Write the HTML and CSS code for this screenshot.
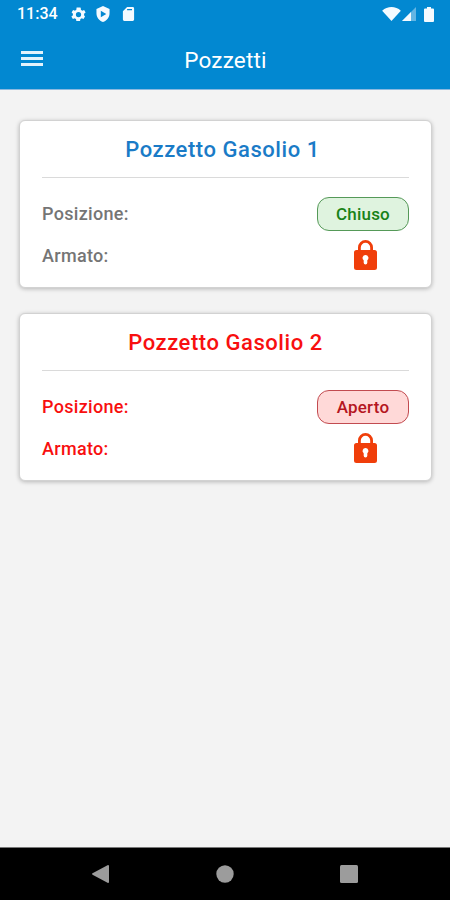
FILE: index.html
```html
<!DOCTYPE html>
<html lang="it">
<head>
<meta charset="utf-8">
<title>Pozzetti</title>
<link rel="stylesheet" href="styles.css">
</head>
<body>
<header class="top">
  <div class="status">
    <span class="clock">11:34</span>
    <svg class="gear" viewBox="2 2 20 20"><path fill-rule="evenodd" d="M19.4 13a7.500 7.500 0 0 0 0-2l2.100-1.600-2-3.500-2.500 1a7.600 7.600 0 0 0-1.700-1L15 3.200a.5.5 0 0 0-.5-.4h-5L9 5.900a7.600 7.600 0 0 0-1.700 1l-2.500-1-2 3.500L4.600 11a7.500 7.500 0 0 0 0 2l-2.100 1.600 2 3.500 2.500-1a7.600 7.600 0 0 0 1.700 1l.4 2.700h5l.4-2.700a7.600 7.600 0 0 0 1.700-1l2.500 1 2-3.500zM12 15.500a3.500 3.500 0 1 1 0-7 3.500 3.500 0 0 1 0 7z"/></svg>
    <svg class="shield" viewBox="3 1 18 22"><path fill-rule="evenodd" d="M12 1 3 5v6c0 5.500 3.800 10.700 9 12 5.200-1.300 9-6.500 9-12V5zM9 7.500l7.500 4.500L9 16.500z"/></svg>
    <svg class="sd" viewBox="4 2 16 20"><path fill-rule="evenodd" d="M18 2h-8L4 8v12a2 2 0 0 0 2 2h12a2 2 0 0 0 2-2V4a2 2 0 0 0-2-2zM10 5h7v1.500h-7z"/></svg>
    <span class="signals">
      <svg class="wifi" viewBox="0 0 20 15"><path d="M10 15 0 4C5.500-1.300 14.500-1.300 20 4z"/></svg>
      <svg class="cell" viewBox="0 0 14 14"><path opacity=".4" d="M14 0v14H0z"/><path d="M9 5v9H0z"/></svg>
      <svg class="battery" viewBox="0 0 10 15"><path d="M3 0h4v1.500h2a1 1 0 0 1 1 1V14a1 1 0 0 1-1 1H1a1 1 0 0 1-1-1V2.500a1 1 0 0 1 1-1h2z"/></svg>
    </span>
  </div>
  <div class="bar">
    <div class="menu"><i></i><i></i><i></i></div>
    <h1>Pozzetti</h1>
  </div>
</header>
<main>
  <section class="card">
    <h2>Pozzetto Gasolio 1</h2>
    <div class="row"><span class="label">Posizione:</span><span class="pill">Chiuso</span></div>
    <div class="row armed"><span class="label">Armato:</span><span class="lock"><svg viewBox="0 0 23 30"><path fill-rule="evenodd" d="M4 10V7.500a7.500 7.500 0 0 1 15 0V10h1.500A2.500 2.500 0 0 1 23 12.500v15a2.500 2.500 0 0 1-2.500 2.500h-18A2.500 2.500 0 0 1 0 27.500v-15A2.500 2.500 0 0 1 2.500 10zM6.800 10h9.400V7.500a4.700 4.700 0 0 0-9.400 0zM11.500 15a2.900 2.900 0 0 0-1.800 5.200v2.600a1.800 1.800 0 0 0 3.600 0v-2.600a2.900 2.900 0 0 0-1.800-5.200z"/></svg></span></div>
  </section>
  <section class="card alert">
    <h2>Pozzetto Gasolio 2</h2>
    <div class="row"><span class="label">Posizione:</span><span class="pill">Aperto</span></div>
    <div class="row armed"><span class="label">Armato:</span><span class="lock"><svg viewBox="0 0 23 30"><path fill-rule="evenodd" d="M4 10V7.500a7.500 7.500 0 0 1 15 0V10h1.500A2.500 2.500 0 0 1 23 12.500v15a2.500 2.500 0 0 1-2.500 2.500h-18A2.500 2.500 0 0 1 0 27.500v-15A2.500 2.500 0 0 1 2.500 10zM6.800 10h9.400V7.500a4.700 4.700 0 0 0-9.400 0zM11.500 15a2.900 2.900 0 0 0-1.800 5.200v2.600a1.800 1.800 0 0 0 3.600 0v-2.600a2.900 2.900 0 0 0-1.800-5.200z"/></svg></span></div>
  </section>
</main>
<nav>
  <svg class="back" viewBox="0 0 17 18"><path d="M16 0q1 0 1 1v16q0 1-1 1L.5 9.700Q-.3 9 .5 8.300z"/></svg>
  <svg class="home" viewBox="0 0 18 18"><circle cx="9" cy="9" r="8.700"/></svg>
  <svg class="recent" viewBox="0 0 18 18"><rect width="18" height="18" rx="1.500"/></svg>
</nav>
</body>
</html>
```
FILE: styles.css
```css
* { box-sizing: border-box; }
body {
  margin: 0;
  height: 900px;
  display: flex;
  flex-direction: column;
  background: #f3f3f3;
  font-family: Roboto, sans-serif;
}
svg { display: block; flex: none; }
.top { height: 90px; background: #0288d1; color: #fff; border-bottom: 1px solid #8bb9e0; }
.status { height: 28px; display: flex; align-items: center; padding: 0 16px 0 17px; fill: #f4faff; }
.clock { width: 54px; font-size: 16px; font-weight: 500; letter-spacing: 0; line-height: 28px; }
.gear { width: 15px; height: 15px; }
.shield { width: 14px; height: 16px; margin-left: 10px; }
.sd { width: 13px; height: 14px; margin-left: 12px; }
.signals { display: flex; align-items: center; margin-left: auto; }
.wifi { width: 19px; height: 14px; }
.cell { width: 14px; height: 14px; margin: 0 8px 0 1px; }
.battery { width: 10px; height: 15px; }
.bar { height: 60px; display: grid; grid-template-columns: 50px 1fr 50px; align-items: center; }
.menu { display: grid; gap: 3px; width: 22px; margin-left: 21px; }
.menu i { height: 3px; background: #e3f3fc; }
h1 { margin: 3px 0 0; padding-left: 1px; text-align: center; font-size: 22.500px; font-weight: 400; letter-spacing: .2px; }
main { flex: 1; padding: 30px 18px 0 19px; }
.card {
  height: 168px;
  margin-bottom: 25px;
  padding: 0 22px;
  border: 1px solid #d2d2d2;
  border-radius: 6px;
  background: #fff;
  color: #757575;
  box-shadow: 0 1px 4px rgba(0, 0, 0, .25);
}
h2 {
  margin: 0 0 18px;
  height: 57px;
  padding-right: 6px;
  border-bottom: 1px solid #dadada;
  color: #1a7bc7;
  font-size: 22px;
  font-weight: 500;
  line-height: 57px;
  letter-spacing: .55px;
  text-align: center;
}
.row { height: 35px; display: flex; align-items: center; justify-content: space-between; }
.label { font-size: 18px; font-weight: 500; letter-spacing: .3px; }
.pill {
  width: 92px;
  height: 34px;
  border: 1px solid #559958;
  border-radius: 12px;
  background: #dff3df;
  color: #188218;
  font-size: 17px;
  font-weight: 500;
  line-height: 33px;
  letter-spacing: .2px;
  text-align: center;
}
.armed { margin-top: 7px; }
.lock { width: 88px; display: flex; justify-content: center; }
.lock svg { width: 23px; height: 30px; margin-bottom: 2px; fill: #f03e0a; }
.alert, .alert h2 { color: #f80f0f; }
.alert h2 { padding-right: 0; }
.alert .pill { border-color: #c24b50; background: #ffd9d8; color: #b51622; }
nav {
  height: 53px;
  display: flex;
  justify-content: space-between;
  align-items: center;
  padding: 0 92px;
  background: #000;
  border-top: 1px solid #777;
  fill: #9c9c9c;
}
.back { width: 17px; height: 18px; }
.home, .recent { width: 18px; height: 18px; }
```
